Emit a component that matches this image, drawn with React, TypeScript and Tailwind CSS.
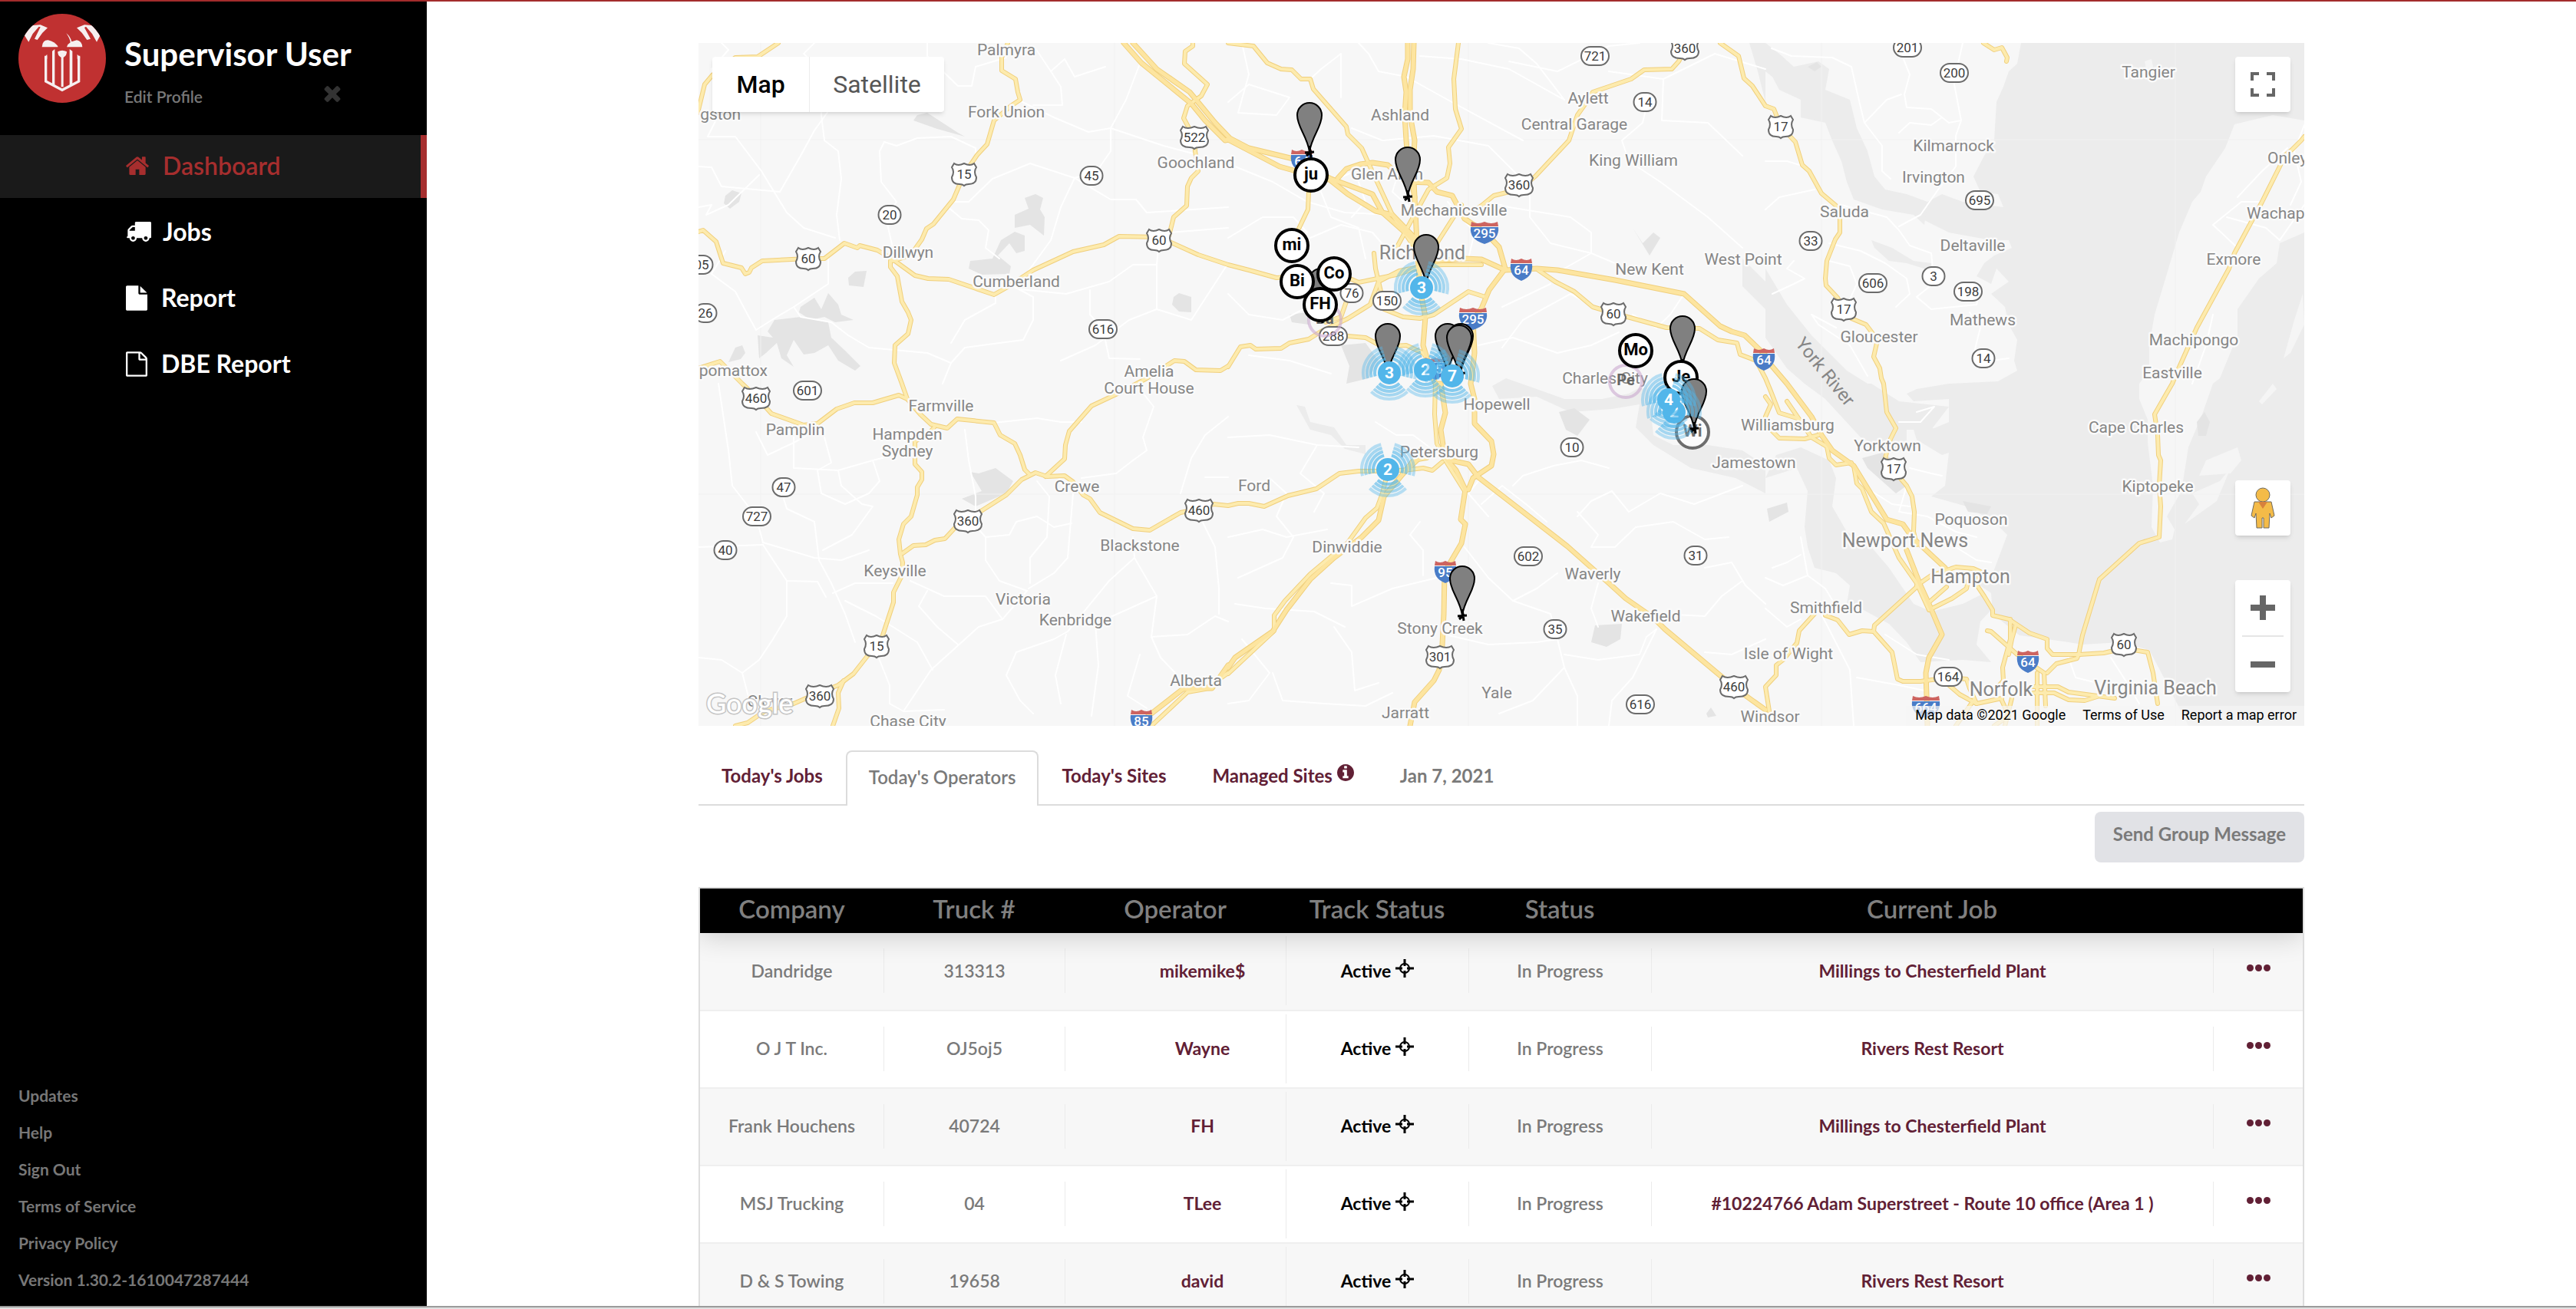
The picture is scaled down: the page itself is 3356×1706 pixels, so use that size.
import React from 'react'

/* ------------------------------------------------------------------ */
/* Icons                                                               */
/* ------------------------------------------------------------------ */

const ICONS = {
  home: 'M1472 992v480q0 26-19 45t-45 19h-384v-384h-256v384h-384q-26 0-45-19t-19-45v-480q0-1 .5-3t.5-3l575-474 575 474q1 2 1 6zm223-69l-62 74q-8 9-21 11h-3q-13 0-21-7l-692-577-692 577q-12 8-24 7-13-2-21-11l-62-74q-8-10-7-23.500t11-21.500l719-599q32-26 76-26t76 26l244 204v-195q0-14 9-23t23-9h192q14 0 23 9t9 23v408l219 182q10 8 11 21.500t-7 23.500z',
  truck:
    'M640 1408q0-52-38-90t-90-38-90 38-38 90 38 90 90 38 90-38 38-90zm-384-512h384v-256h-158q-13 0-22 9l-195 195q-9 9-9 22v30zm1280 512q0-52-38-90t-90-38-90 38-38 90 38 90 90 38 90-38 38-90zm256-1088v1024q0 15-4 26.500t-13.500 18.500-16.500 11.500-23.500 6-22.500 2-25.500 0-22.500-.5q0 106-75 181t-181 75-181-75-75-181h-384q0 106-75 181t-181 75-181-75-75-181h-64q-3 0-22.500 .5t-25.500 0-22.500-2-23.500-6-16.500-11.500-13.500-18.500-4-26.500q0-26 19-45t45-19v-320q0-8-.5-35t0-38 2.500-34.500 6.500-37 14-30.500 22.500-30l198-198q19-19 50.500-32t58.500-13h160v-192q0-26 19-45t45-19h1024q26 0 45 19t19 45z',
  file: 'M1152 512v-472q22 14 36 28l408 408q14 14 28 36h-472zm-128 32q0 40 28 68t68 28h544v1056q0 40-28 68t-68 28h-1344q-40 0-68-28t-28-68v-1600q0-40 28-68t68-28h800v544z',
  fileOutline:
    'M1596 380q28 28 48 76t20 88v1152q0 40-28 68t-68 28h-1344q-40 0-68-28t-28-68v-1600q0-40 28-68t68-28h896q40 0 88 20t76 48zm-444-244v376h376q-10-29-22-41l-313-313q-12-12-41-22zm384 1528v-1024h-416q-40 0-68-28t-28-68v-416h-768v1536h1280z',
  times:
    'M1490 1322q0 40-28 68l-136 136q-28 28-68 28t-68-28l-294-294-294 294q-28 28-68 28t-68-28l-136-136q-28-28-28-68t28-68l294-294-294-294q-28-28-28-68t28-68l136-136q28-28 68-28t68 28l294 294 294-294q28-28 68-28t68 28l136 136q28 28 28 68t-28 68l-294 294 294 294q28 28 28 68z',
  info: 'M1152 1376v-160q0-14-9-23t-23-9h-96v-512q0-14-9-23t-23-9h-320q-14 0-23 9t-9 23v160q0 14 9 23t23 9h96v320h-96q-14 0-23 9t-9 23v160q0 14 9 23t23 9h448q14 0 23-9t9-23zm-128-896v-160q0-14-9-23t-23-9h-192q-14 0-23 9t-9 23v160q0 14 9 23t23 9h192q14 0 23-9t9-23zm640 416q0 209-103 385.500t-279.500 279.500-385.500 103-385.500-103-279.500-279.500-103-385.500 103-385.500 279.500-279.500 385.500-103 385.500 103 279.500 279.500 103 385.500z',
}

function Icon({ name, box = '0 0 1792 1792', className }: { name: keyof typeof ICONS; box?: string; className: string }) {
  return (
    <svg viewBox={box} className={className} fill="currentColor" aria-hidden="true">
      <path d={ICONS[name]} />
    </svg>
  )
}

function Avatar() {
  return (
    <svg viewBox="42 24 342 348" className="mt-4 h-[116px] w-[114px] shrink-0" aria-hidden="true">
      <defs>
        <clipPath id="avatar">
          <ellipse cx="213" cy="198" rx="171" ry="174" />
        </clipPath>
      </defs>
      <g clipPath="url(#avatar)">
        <rect x="42" y="24" width="342" height="348" fill="#c03131" />
        <g fill="#f6eff0">
          <path d="M60 100 92 70 128 67 156 79 136 98 116 126 105 122 128 76 122 74 98 102 82 134Z" />
          <path d="M366 100 334 70 300 67 270 79 290 98 310 126 324 122 300 78 306 74 330 102 348 134Z" />
          <path d="M134 154Q136 126 158 127Q184 134 196 150V154Z" />
          <path d="M292 154Q290 130 270 127L250 133Q246 114 229 100Q244 122 245 136Q234 142 231 154Z" />
          <path d="M196 172Q213 162 231 172Q232 186 218 195V310H209V195Q194 186 196 172Z" />
          <path d="M174 170 184 162V306L174 300ZM242 162 253 170V300L242 306Z" />
        </g>
        <path d="M149 188V288L213 322L278 288V188" fill="none" stroke="#f6eff0" strokeWidth="10" />
        <path d="M143 196 154 182V200ZM284 196 272 182V200Z" fill="#f6eff0" />
      </g>
    </svg>
  )
}

function Crosshair() {
  return (
    <svg viewBox="0 0 24 24" className="mb-[6px] ml-[6px] inline-block size-6" fill="none" stroke="#000" aria-hidden="true">
      <circle cx="12" cy="12" r="6" strokeWidth="2" />
      <path d="M12 0V9M12 15V24M0 12H9M15 12H24" strokeWidth="3" />
    </svg>
  )
}

/* ------------------------------------------------------------------ */
/* Map geometry: six survey sheets joined into one drawing             */
/* ------------------------------------------------------------------ */

const SHEETS: Record<string, [number, number, number]> = {
  nw: [900, 50, 2.24],
  n: [1600, 50, 2.24],
  ne: [2300, 50, 2.178],
  sw: [900, 500, 2.24],
  s: [1600, 500, 2.24],
  se: [2300, 500, 2.178],
}

function trace(line: string, closed = false) {
  let sheet = SHEETS.nw
  const pts: string[] = []
  for (const token of line.trim().split(/\s+/)) {
    if (SHEETS[token]) {
      sheet = SHEETS[token]
      continue
    }
    const [x, y] = token.split(',').map(Number)
    pts.push(`${Math.round(sheet[0] + x / sheet[2])} ${Math.round(sheet[1] + y / 3)}`)
  }
  return 'M' + pts.join('L') + (closed ? 'Z' : '')
}

const WATER = [
  'ne 725,18 715,100 690,130 675,190 655,250 650,400 620,460 590,540 610,600 660,610 675,660 560,640 500,610 460,640 450,710 520,760 640,790 690,790 700,820 650,850 620,880 600,930 640,960 655,900 690,950 640,1000 680,1050 690,1120 715,1180 705,1260 715,1300 660,1340 se 520,0 430,20 400,40 420,70 520,60 520,150 480,175 420,180 430,220 500,280 520,270 510,400 470,440 570,480 650,540 685,590 640,760 600,780 640,820 645,900 720,985 860,1010 900,1020 1010,1010 1090,1040 1130,1150 1200,1338 1540,1338 ne 1540,18',
  'ne 0,18 40,60 80,110 150,90 180,120 170,200 240,240 260,350 290,440 310,540 340,590 400,610 460,640 450,730 420,690 330,670 250,630 230,560 215,480 190,400 170,330 100,310 100,240 40,200 20,150 0,130',
  'ne 0,900 60,1040 130,1160 230,1300 290,1350 se 300,0 380,70 520,90 470,180 400,180 400,260 360,270 270,210 170,60 110,0 60,-60 0,-180',
  'se 0,370 30,280 100,250 180,300 200,370 190,480 230,580 300,640 350,720 420,860 470,890 560,860 620,820 645,880 610,930 600,1020 640,1090 560,1080 440,1090 400,1010 350,940 270,880 230,860 240,790 200,740 140,720 120,640 110,560 120,420 90,330',
  's 770,10 810,-20 900,20 980,60 1090,60 1170,40 1220,0 1230,60 1240,200 1300,240 1400,240 1500,260 1568,320 1568,430 1480,370 1350,330 1240,240 1190,170 1200,80 1120,100 1000,110 900,50 790,60',
  'ne 300,790 360,820 420,870 470,880 470,910 400,880 350,870 310,820',
  'n 1520,18 1568,18 1568,250 1545,130',
  'n 1500,860 1568,950 1568,1060 1500,970',
  's 200,85 225,90 240,150 310,170 345,240 400,240 400,275 340,255 300,200 240,180',
]

const SHORE =
  'ne 1529,320 1440,300 1330,335 1305,430 1250,540 1235,600 1210,640 1175,760 1140,920 1105,1080 1090,1200 1090,1300 1060,1350 se 1060,60 1085,140 1085,230 1100,400 1095,560 1120,620 1155,610 1160,570 1140,520 1180,420 1200,250 1240,120 1270,0 ne 1290,1330 1340,1160 1340,1060 1400,940 1450,880 1460,800 1529,760'

const ISLANDS = [
  'se 1210,430 1290,380 1320,330 1280,460 1190,550 1230,470',
  'se 1250,300 1340,250 1350,300 1320,350 1230,360',
  'ne 1470,1250 1500,1100 1525,1000 1529,1120 1490,1230',
  'se 1400,70 1440,0 1450,20 1410,80',
  'ne 1075,90 1095,80 1100,110 1080,120',
]

const PARKS = [
  'nw 100,615 120,595 148,605 140,640 115,665 97,645',
  'nw 975,625 1005,610 1028,625 1020,670 1032,700 1030,770 990,730 945,740 945,690 985,665',
  'nw 945,755 975,770 975,830 950,840 930,800 895,850 935,890 930,920 850,925 810,900 815,870 880,860 905,790',
  'nw 1408,1010 1425,995 1460,1010 1460,1070 1425,1068 1405,1040',
  'nw 460,935 480,912 513,908 503,972 462,965',
  'nw 245,1100 320,1090 400,1110 410,1170 450,1220 495,1280 480,1300 430,1260 400,1200 360,1230 330,1235 300,1180 280,1240 300,1285 265,1250 250,1190 220,1230 200,1250 195,1160 240,1170 225,1145',
  'nw 320,1050 360,1015 380,1060 400,995 430,1040 440,1080 475,1100 420,1110 390,1090 350,1100 315,1070',
  'nw 130,1210 150,1200 160,1230 145,1255 110,1265',
  'nw 660,300 690,290 780,370 800,385 720,355 650,320',
  'sw 840,350 890,330 940,380 920,430 830,480 790,450 850,420 815,345',
  'n 330,1200 400,1190 440,1260 410,1330 345,1350 355,1280',
  'n 1210,800 1240,760 1260,780 1230,850 1180,740',
  's 965,110 1010,95 1055,140 1020,205 985,180',
  's 1070,945 1150,940 1145,1000 1105,1030 1060,1010',
  's 1395,1290 1410,1265 1425,1300 1400,1305',
  'ne 120,110 145,92 160,110 140,130',
  'se 275,290 330,270 375,310 400,400 370,430 290,330',
  'se 5,490 60,465 65,500 10,540',
  'se 560,460 640,480 630,510 575,500',
  'se 1225,150 1245,110 1260,150 1250,205 1228,205',
  'n 180,1080 230,1070 235,1120 185,1110',
]

const MINOR = [
  'nw 90,18 110,45 60,120 80,300 50,385 130,385 205,520 280,680 330,740 420,780',
  'nw 22,500 60,505 90,580 260,600 320,460 360,360 430,230 500,120',
  'nw 360,18 330,60 370,110 380,300 390,400 430,440 440,550 425,690 435,790',
  'nw 565,405 550,440 555,560 600,640 570,700 590,820',
  'nw 565,405 600,420 660,390 760,385 830,430 830,470',
  'nw 690,18 690,70 780,185 820,185 830,110 920,75',
  'nw 1005,40 1050,130 1080,190 1085,260 1000,260',
  'nw 1050,130 1090,80 1120,150 1210,110',
  'nw 955,240 1060,310 1160,365 1225,350 1380,420 1465,450',
  'nw 1310,100 1270,240 1225,350 1225,440 1185,520 1120,545 1080,660 1050,790 985,910',
  'nw 770,640 810,640 880,550 990,490 1120,545 1225,630 1300,630 1330,680 1568,660',
  'nw 750,660 790,705 840,710 870,750 860,820 900,860',
  'nw 22,660 60,650 45,690 110,650 200,535',
  'nw 100,830 60,920 130,990 165,1080 190,1140 250,1090 300,1050 400,960 400,860',
  'nw 300,1050 320,1090 410,1110 460,1160 520,1210 690,1230 760,1270',
  'nw 940,970 1000,1010 1000,1100 970,1180 900,1190 800,1210 760,1270 735,1350',
  'nw 960,980 1095,1000 1220,950 1290,885 1360,885 1360,1060 1280,1100 1180,1200 1080,1260',
  'nw 1365,820 1360,885',
  'nw 1360,1060 1460,1100 1568,880',
  'nw 1165,985 1165,1080 1203,1137 1220,1250 1310,1255',
  'nw 890,1010 890,1035 800,1100 760,1190',
  'nw 1395,760 1568,740',
  'n 40,18 60,140 30,290 140,300 180,230 60,180 0,250',
  'n 240,160 270,120 330,60 330,230',
  'n 380,18 410,60 440,130 520,150 640,240 860,400',
  'n 360,350 450,400 600,380 760,420 850,540',
  'n 560,70 680,80 820,120 980,240',
  'n 820,90 960,130 1110,30 1200,18',
  'n 980,240 900,100 850,40 760,18',
  'n 1110,130 1270,160 1420,60 1568,120',
  'n 1217,290 1210,330 1150,400 1170,480 1260,560 1400,700 1500,820',
  'n 1270,160 1265,320 1400,330 1500,460',
  'n 880,600 880,700 940,800 1060,840 1130,880',
  'n 760,640 820,660 1000,700 1060,760 1060,840 980,900',
  'n 20,500 130,560 230,640 340,680 480,690',
  'n 240,780 330,730 420,760 480,850',
  'n 270,600 300,700 380,740 400,860',
  'n 300,560 370,520 400,640 360,700',
  'n 0,780 100,700 190,700 230,760',
  'n 0,1000 60,1080 160,1100 220,1060',
  'n 520,430 480,600 560,700 680,650',
  'n 640,640 720,760 700,860',
  'n 800,1050 880,1000 940,960',
  'n 800,1210 860,1100 1000,1000 1070,1050',
  'n 730,1200 830,1170 960,1230 1060,1200 1140,1150',
  'n 60,1240 180,1260 300,1310',
  'n 1330,1000 1290,1080 1250,1130 1180,1080',
  'ne 18,40 75,70 190,75 245,110 270,270 280,330 330,420 330,520 355,550',
  'ne 560,18 545,110 535,180 555,320 540,380 540,500 490,590 440,690 380,735',
  'ne 390,75 410,140 395,220 400,270 470,275 520,330 555,320',
  'ne 280,330 345,240 385,220',
  'ne 380,370 410,330 470,340 500,310',
  'ne 0,480 60,480 110,500',
  'ne 0,670 40,620 140,590',
  'ne 215,650 345,700 380,750 410,810 470,840 475,900',
  'ne 180,800 270,830 340,880 400,940 410,1000 370,1050',
  'ne 180,870 240,890 260,960 240,1020',
  'ne 475,960 430,1010 470,1060 600,1040 610,980',
  'ne 580,1070 610,1130 590,1240 640,1260 690,1250',
  'ne 20,1000 80,960 110,940 60,900 80,870',
  'ne 200,1130 130,1080 150,1120 240,1200 290,1320',
  'ne 1340,620 1410,520 1480,430',
  'ne 1400,640 1350,640 1270,730 1340,820',
  'ne 1310,700 1420,740 1460,790 1529,650',
  'ne 1529,340 1500,440 1520,560 1490,650',
  'ne 1270,1080 1250,1200 1210,1350',
  'sw 80,0 110,260 120,400 190,520 210,620 360,680 440,690 520,650',
  'sw 190,190 225,280 300,230 370,180',
  'sw 300,200 300,330 430,340 530,300 620,270',
  'sw 390,210 410,310 370,340 380,430 450,470 520,430 550,380 530,300',
  'sw 430,340 440,400 500,470 530,480 470,590 385,650',
  'sw 22,640 210,630',
  'sw 272,450 280,490 360,540 375,690 410,780 450,900 480,1010',
  'sw 210,630 280,770 370,775 395,835',
  'sw 280,770 280,910 240,1000 200,1080 150,1130 180,1280',
  'sw 22,1070 90,1080 150,1130',
  'sw 640,770 740,830 860,830 910,920 840,950 700,1120 620,1280',
  'sw 690,810 665,870 720,950 780,1020',
  'sw 415,820 480,780 590,780',
  'sw 450,850 540,910 660,1010 705,1120',
  'sw 545,1060 580,1180 580,1250 620,1280 740,1275',
  'sw 800,180 810,300 830,440 830,500',
  'sw 885,152 1010,135 1080,150 1140,150',
  'sw 840,570 860,600 860,690 900,770 980,810 910,920',
  'sw 860,600 930,590 950,540 1010,520 1060,560 1110,545',
  'sw 1010,380 1045,440 1040,600 990,680 990,780',
  'sw 1115,430 1100,680 1060,740 985,800',
  'sw 1290,600 1295,680 1220,770 1100,970 1060,1000 950,1050 920,1140 960,1240 1000,1290',
  'sw 1295,680 1360,830 1180,940 1190,1100 1170,1300',
  'sw 1360,830 1345,990 1370,1070 1420,1140',
  'sw 1345,990 1450,980 1530,910 1568,930',
  'sw 1095,980 1065,1140 1080,1250',
  'sw 1310,1060 1275,1220 1330,1270',
  'sw 1310,20 1350,90 1320,210 1330,260 1290,300 1240,350 1140,370',
  'sw 1568,130 1500,200 1460,290 1430,430',
  'sw 1500,365 1568,365',
  'sw 1485,520 1530,640 1540,800 1540,900',
  's 0,210 120,200 260,240 380,250',
  's 260,240 210,350 280,430 250,500',
  's 0,600 100,570 170,600 290,570',
  's 120,370 170,430 140,520 190,600 160,680 30,760',
  's 300,780 360,790 360,870 480,800 610,760',
  's 560,540 530,590 570,650 570,750',
  's 430,150 490,200 540,200 600,260',
  's 730,380 700,430 760,520',
  's 740,470 800,400 870,470 930,540',
  's 690,640 760,760 830,850 940,900 960,1000 980,1110 890,1240 790,1290',
  's 635,980 760,1020 900,1010 960,1000',
  's 830,850 900,800 960,740',
  's 980,1110 1020,1220 1020,1338',
  's 980,1060 1080,1080 1200,1060 1220,990 1250,960',
  's 1250,960 1180,1150 1120,1240 1110,1338',
  's 1080,780 1060,880 1080,950',
  's 1020,500 1080,590 1060,640 1130,640 1190,560 1300,540 1390,610 1460,600',
  's 1170,500 1120,420 1060,460 1020,520',
  's 1170,500 1260,430 1360,470 1500,400',
  's 1390,720 1470,700 1510,790 1568,860',
  's 1260,900 1390,910 1440,830 1500,770',
  's 1390,1050 1470,1060 1568,1000',
  's 830,400 860,360 950,320 1030,300 1110,330',
  's 40,1000 120,1130 60,1240 0,1250',
  's 130,1130 160,1240 280,1250 400,1260 480,1210',
  's 310,950 360,1050 370,1200 440,1170',
  's 20,860 110,880 250,890 340,950',
  'se 100,600 120,750 50,790 0,760',
  'se 120,750 170,800 200,870',
  'se 0,880 60,950 100,920',
  'se 150,880 240,1120 250,1338',
  'se 100,670 60,700 20,720',
  'se 380,150 440,150 480,90 430,110',
  'se 410,330 470,350 500,360',
  'se 400,400 380,500 460,520 540,580 600,600',
  'se 540,640 600,690 640,700',
  'se 340,980 430,1060 520,1080',
  'se 860,1070 880,1150 940,1170',
  'se 980,1070 1030,1180 1060,1250',
  'se 260,1150 380,1180 450,1200',
  'se 650,1180 720,1180 770,1180',
  'se 300,420 360,470 410,480',
]

const HIGHWAYS = [
  'nw 255,18 195,72 130,75 62,145 40,180 20,290',
  'nw 925,18 908,75 908,125 948,160 955,210 962,240 935,265 885,320 865,415 835,455 797,530 765,630 708,725 688,745 675,785 640,850 590,870',
  'nw 22,755 35,750 75,795 95,880 148,898 158,922 170,915 178,898 208,870 340,862 390,860 447,800 485,818 492,810 545,828 590,865 655,928 692,940 752,942 885,1002 920,975 1000,905 1115,835 1205,808 1250,775 1367,778 1480,845 1568,885 n 60,905 140,935 200,930 330,925 380,955 490,925 570,890 625,885 740,885',
  'nw 582,870 582,895 603,930 615,1030 635,1070 642,1100 635,1155 595,1200 593,1270 615,1350 sw 632,60 655,95 670,120 700,158 748,175 778,138 885,152 902,200 945,235 960,280 975,335 990,357',
  'nw 1465,18 1465,30 1443,50 1440,98 1508,180 1490,225 1450,265 1437,312 1470,390 1472,440 1480,520 1460,545 1450,580 1447,655 1410,700 1395,770',
  'nw 22,1290 85,1262 150,1350 sw 190,50 235,118 330,162 370,155 425,100 478,75 530,75 608,45 632,60',
  'n 0,1285 35,1205 65,1200 80,1215 155,1212 180,1190 235,1175 270,1145 350,1095 415,1040 440,950 500,910 570,890',
  'nw 1568,1280 1545,1300 1475,1295 1440,1262 1412,1260 1330,1330 sw 1245,40 1170,88 1105,185 1092,240 1090,295 1035,362',
  'sw 710,170 690,200 655,225 655,315 675,345 675,375 660,405 660,435 643,520 620,550 608,610 612,665 618,700 615,750 592,815 592,855 560,985 545,1030 515,1065 475,1135 430,1178 335,1230 300,1250 215,1282 165,1325 130,1338',
  'sw 445,1160 430,1210 432,1270 415,1338',
  'sw 618,662 650,632 685,630 712,612 742,605 770,565 808,530 920,435 965,375 1005,348 1040,362 1090,360 1115,385 1145,435 1165,450 1195,505 1290,568 1340,573 1430,503 1485,490 1525,470 s 0,478 30,468 60,468 105,480 175,437 258,412 325,352 380,343 465,343 530,335 570,330 595,338 625,305',
  'n 0,18 75,30 115,95 155,120 185,122 213,160 240,160 248,198 345,345 350,375 390,430 410,490 480,690 550,830',
  'n 673,18 658,160 662,275 680,355 643,425 648,490 638,545 585,590 560,650',
  'n 235,540 235,600 232,670 205,745',
  'n 905,905 955,950 1010,990 1065,1050 1125,1075 1280,1130 1375,1135 1430,1180 1485,1190 1495,1235 1540,1260 ne 0,1330 se 15,30 40,115 90,135 130,170',
  'n 710,680 740,655 775,615 850,590 895,540 995,398 1020,300 1045,250 1065,210 1175,160 1215,122 1295,120 1315,90 1335,40',
  'n 1435,18 1490,70 1505,155 1530,185 1568,265 ne 25,275 43,345 85,405 105,495 125,520 160,605 200,655 212,700 212,760 198,785 175,870 170,940 172,965 205,1015 222,1060 245,1095 285,1120 318,1180 308,1245 325,1290 328,1330 se 335,0 345,110 370,175 355,215 340,290 363,340 400,400 415,440 422,500 420,580 430,630',
  'n 425,840 430,900 445,990 455,1060 510,1090 560,1095 600,1080 700,990 750,1010',
  'n 680,650 610,800 560,860',
  'n 480,850 540,700',
  'n 350,1165 400,1170 450,1205 520,1200 570,1230 580,1250',
  'n 285,1110 330,1090 345,1030',
  'ne 1529,385 1520,400 1495,435 1475,455 1460,500 1410,640 1330,840 1315,900 1225,1130 1170,1300 se 1155,0 1140,35 1105,120 1112,200 1115,280 1122,300 1118,400 1122,480 1118,600 1060,625 948,765 900,985 888,1060 885,1075 825,1095 800,1130',
  'ne 618,18 650,45 670,35 685,75 683,90',
  'se 0,50 15,80 0,130',
  'se 0,160 40,212 110,215 150,200',
  'se 60,70 130,210 175,245 180,290 200,318 245,310',
  'se 250,320 260,390 275,410 300,500 335,545 380,680 430,780 465,885 530,840 570,800 575,770',
  'se 430,790 470,750 540,718 590,722 610,735 600,785 620,830 645,885 645,905 690,920 750,975 800,1000 800,1035 815,1058 890,1058 960,1052 1017,1035 1085,1050 1100,1130 1112,1250',
  'se 430,795 310,945 308,970 360,1050 375,1155 390,1163 440,1163 520,1150 570,1155 580,1190 600,1250',
  'se 308,970 275,965 238,982 205,925 170,905',
  'se 140,900 95,965 90,1015 50,1080 30,1100 30,1140 0,1185 10,1280',
  'se 465,855 515,795',
  'se 630,965 640,968 715,1060 790,1130 795,1260',
  'se 695,920 695,1000 672,1110 675,1160 650,1200',
  'se 710,945 700,1000 690,1060',
  'se 520,1180 550,1215 600,1250 640,1240 670,1230',
  'se 770,1130 770,1338',
  'se 760,1185 830,1185 860,1205 990,1230',
  'se 760,1210 820,1210 860,1235 905,1240 940,1225',
  'se 590,1240 540,1338',
  'se 670,1240 690,1300 650,1338',
  'se 700,1230 680,1338',
  'sw 1568,1130 1500,1195 1450,1205 1345,1338',
  's 0,1135 135,965 135,905 165,850 240,745 350,620 400,525 435,485 450,430 465,343',
  's 500,370 540,300 580,290',
  's 605,0 602,120 610,235 635,300 690,420',
]

const INTERSTATES = [
  'nw 1263,18 1315,95 1460,255 1500,320 1560,400 n 0,395 150,500 190,515 235,545 295,552 350,610 430,675 480,690 545,780',
  'nw 1290,18 1360,120 1455,210 1530,330 n 5,390 60,430 190,470 300,550 360,580 420,610 450,680 550,800',
  'n 525,18 525,80 512,150 520,210 515,300 520,400 525,470 545,620 550,800 560,980 575,1090 570,1200 590,1290 605,1350 s 620,0 635,115 620,180 628,240 640,300 665,340 692,415 678,530 692,550 680,625 650,695 632,740 630,900 625,1020 615,1120 600,1160 545,1245 530,1338',
  'n 543,18 540,120 530,200 530,300 545,400 540,500 545,620',
  'n 320,545 345,510 385,492 420,487 465,495 520,560 585,565 610,600 655,615 690,705 750,760 790,815 808,900 762,985 740,1055 715,1100 718,1230 710,1330 s 708,0 720,60 720,155 768,225 775,275 768,320 715,370 700,415',
  'n 600,870 690,860 740,865 808,905 900,900 960,905 1130,945 1330,1000 1435,1125 1470,1145 1508,1160 1568,1240 ne 10,1270 se 60,0 130,130 160,200 190,260 250,320 345,530 390,550 415,600 510,720',
  's 650,300 700,315 730,365 820,460 990,635 1110,780 1160,840 1240,915 1275,960 1440,1145 1480,1190 1530,1240 1568,1275',
  's 0,1110 20,1070 130,970 170,885 240,765 310,680 390,600 440,535 455,440 515,345 555,295',
  'sw 1568,1100 1520,1190 1435,1195 1345,1290 1300,1338',
  'se 400,650 440,790 465,860 500,980 465,1070 455,1130 458,1220 460,1338',
]

const GRID = ['nw 203,18 203,1350 sw 203,1338', 'nw 1237,18 1237,1350 sw 1237,1338', 'n 700,18 700,1350 s 700,1338', 'ne 158,18 158,1350 se 158,1338', 'ne 1163,18 1163,1350 se 1163,1338', 'nw 22,397 n 0,397 ne 1529,397', 'sw 22,433 s 0,433 se 1529,433']

type Anchor = 'start' | 'middle' | 'end'
const TOWNS: [string, number, number, Anchor?][] = [
  ['Palmyra', 1311, 72],
  ['Fork Union', 1311, 153],
  ['gston', 965, 156, 'end'],
  ['Goochland', 1558, 219],
  ['Dillwyn', 1183, 336],
  ['Cumberland', 1324, 374],
  ['pomattox', 1000, 490, 'end'],
  ['Amelia', 1497, 491],
  ['Court House', 1497, 513],
  ['Ashland', 1824, 157],
  ['Glen Allen', 1807, 234],
  ['Mechanicsville', 1894, 281],
  ['Aylett', 2069, 135],
  ['Central Garage', 2051, 169],
  ['King William', 2128, 216],
  ['New Kent', 2149, 358],
  ['West Point', 2271, 345],
  ['Charles City', 2091, 500],
  ['Tangier', 2799, 101],
  ['Kilmarnock', 2545, 197],
  ['Irvington', 2519, 238],
  ['Saluda', 2403, 283],
  ['Deltaville', 2570, 327],
  ['Onley', 2954, 213, 'start'],
  ['Wachapreague', 2927, 285, 'start'],
  ['Exmore', 2910, 345],
  ['Mathews', 2583, 424],
  ['Gloucester', 2448, 446],
  ['Machipongo', 2858, 450],
  ['Eastville', 2830, 493],
  ['Farmville', 1226, 536],
  ['Hampden', 1182, 573],
  ['Sydney', 1182, 595],
  ['Pamplin', 1036, 567],
  ['Crewe', 1403, 641],
  ['Blackstone', 1485, 718],
  ['Keysville', 1166, 751],
  ['Victoria', 1333, 788],
  ['Kenbridge', 1401, 815],
  ['Alberta', 1558, 894],
  ['Clover', 1003, 921],
  ['Chase City', 1183, 947],
  ['Hopewell', 1950, 534],
  ['Petersburg', 1875, 596],
  ['Ford', 1634, 640],
  ['Dinwiddie', 1755, 720],
  ['Waverly', 2075, 755],
  ['Wakefield', 2144, 810],
  ['Stony Creek', 1876, 826],
  ['Yale', 1950, 910],
  ['Jarratt', 1831, 936],
  ['Williamsburg', 2329, 561],
  ['Jamestown', 2285, 610],
  ['Isle of Wight', 2330, 859],
  ['Windsor', 2306, 941],
  ['Yorktown', 2459, 588],
  ['Cape Charles', 2783, 564],
  ['Kiptopeke', 2811, 641],
  ['Poquoson', 2568, 684],
  ['Smithfield', 2379, 799],
]

const CITIES: [string, number, number][] = [
  ['Richmond', 1853, 338],
  ['Newport News', 2482, 713],
  ['Hampton', 2567, 760],
  ['Norfolk', 2607, 907],
  ['Virginia Beach', 2808, 905],
]

const US_ROUTES: [string, number, number][] = [
  ['522', 1556, 179], ['15', 1256, 227], ['60', 1510, 313], ['60', 1053, 337], ['360', 1979, 241], ['360', 2195, 63],
  ['60', 2102, 409], ['17', 2320, 165], ['17', 2402, 403], ['460', 985, 519], ['360', 1261, 679], ['460', 1562, 665],
  ['15', 1142, 842], ['360', 1068, 907], ['301', 1876, 856], ['460', 2259, 895], ['17', 2467, 611], ['60', 2767, 840],
]

const STATE_ROUTES: [string, number, number][] = [
  ['45', 1422, 229], ['20', 1159, 280], ['05', 914, 345], ['26', 919, 408], ['616', 1437, 429], ['721', 2078, 73],
  ['14', 2143, 133], ['76', 1761, 382], ['150', 1807, 392], ['288', 1737, 438], ['201', 2485, 62], ['200', 2546, 95],
  ['695', 2579, 261], ['33', 2359, 314], ['606', 2440, 369], ['3', 2519, 360], ['198', 2564, 380], ['14', 2584, 467],
  ['601', 1052, 509], ['47', 1021, 635], ['727', 986, 673], ['40', 945, 717], ['10', 2048, 583], ['602', 1991, 725],
  ['31', 2209, 724], ['35', 2026, 820], ['616', 2137, 918], ['164', 2538, 882],
]

const INTERSTATE_SIGNS: [string, number, number][] = [
  ['64', 1696, 209], ['295', 1934, 303], ['64', 1982, 351], ['295', 1919, 415], ['64', 2298, 468], ['95', 1870, 480],
  ['85', 1487, 939], ['95', 1883, 745], ['64', 2642, 862], ['664', 2509, 921],
]

function UsShield({ label, x, y }: { label: string; x: number; y: number }) {
  const w = label.length > 2 ? 18 : 16
  return (
    <g transform={`translate(${x} ${y})`}>
      <path
        d={`M${-w + 3}-14Q${-w / 2}-10 0-14Q${w / 2}-10 ${w - 3}-14L${w}-9Q${w - 4}-3 ${w} 4Q${w} 13 6 13Q2 13 0 15Q-2 13-6 13Q${-w} 13 ${-w} 4Q${-w + 4}-3 ${-w}-9Z`}
        fill="#fff"
        stroke="#6b6b6b"
        strokeWidth="2"
      />
      <text y="6" textAnchor="middle" className="fill-[#3c3c3c] text-[17px]">{label}</text>
    </g>
  )
}

function StateRoute({ label, x, y }: { label: string; x: number; y: number }) {
  const w = label.length > 2 ? 36 : 29
  return (
    <g transform={`translate(${x} ${y})`}>
      <rect x={-w / 2} y="-12" width={w} height="24" rx="12" fill="#fff" stroke="#6b6b6b" strokeWidth="2" />
      <text y="6" textAnchor="middle" className="fill-[#3c3c3c] text-[17px]">{label}</text>
    </g>
  )
}

function InterstateSign({ label, x, y }: { label: string; x: number; y: number }) {
  const w = label.length > 2 ? 18 : 14
  return (
    <g transform={`translate(${x} ${y})`}>
      <path d={`M${-w}-8L${-w + 1}-14Q${-w / 2}-10 0-14Q${w / 2}-10 ${w - 1}-14L${w}-8Z`} fill="#cd6460" />
      <path d={`M${-w}-7H${w}Q${w + 2} 9 0 15Q${-w - 2} 9 ${-w}-7Z`} fill="#4a7cc7" />
      <text y="7" textAnchor="middle" className="fill-white text-[17px] font-medium">{label}</text>
    </g>
  )
}

function Pin({ x, y }: { x: number; y: number }) {
  return (
    <g transform={`translate(${x} ${y})`} stroke="#000">
      <path d="M0 64C-3 43-16 32-16 16A16 16 0 1 1 16 16C16 32 3 43 0 64Z" fill="#808080" strokeWidth="2" />
      <path d="M-6 65L6 64M-4 69L3 63M0 56L2 71" strokeWidth="3" fill="none" />
    </g>
  )
}

function Operator({ label, x, y, r = 21 }: { label: string; x: number; y: number; r?: number }) {
  return (
    <g transform={`translate(${x} ${y})`}>
      <circle r={r} fill="#fff" stroke="#000" strokeWidth="4" />
      <text y="6" textAnchor="middle" className="fill-black text-[22px] font-bold">{label}</text>
    </g>
  )
}

function arc(r: number, from: number, to: number) {
  const p = (a: number) => `${(r * Math.cos((a * Math.PI) / 180)).toFixed(1)} ${(r * Math.sin((a * Math.PI) / 180)).toFixed(1)}`
  return `M${p(from)}A${r} ${r} 0 0 1 ${p(to)}`
}

function Cluster({ count, x, y }: { count: number; x: number; y: number }) {
  return (
    <g transform={`translate(${x} ${y})`}>
      {[
        [19, 0.7],
        [24, 0.6],
        [29, 0.5],
        [34, 0.4],
      ].map(([r, o]) => (
        <path key={r} d={arc(r, -75, 14) + arc(r, 46, 134) + arc(r, 166, 255)} fill="none" stroke="#52b6ea" strokeWidth="4" opacity={o} />
      ))}
      <circle r="15" fill="#52b6ea" />
      <text y="7" textAnchor="middle" className="fill-white text-[21px] font-bold">{count}</text>
    </g>
  )
}

function MapDrawing() {
  return (
    <svg viewBox="910 56 2092 890" preserveAspectRatio="xMidYMid slice" className="block h-full w-full" role="img" aria-label="Map of central Virginia">
      <rect x="910" y="56" width="2092" height="890" fill="#f7f7f7" />
      {WATER.map((w) => <path key={w} d={trace(w, true)} fill="#ececec" />)}
      <path d={trace(SHORE, true)} fill="#f6f6f6" />
      {ISLANDS.map((w) => <path key={w} d={trace(w, true)} fill="#f5f5f5" />)}
      {PARKS.map((w) => <path key={w} d={trace(w, true)} fill="#e4e4e4" />)}
      <g fill="none" strokeLinejoin="round" strokeLinecap="round">
        {GRID.map((r) => <path key={r} d={trace(r)} stroke="#f1f1f1" />)}
        {MINOR.map((r) => <path key={r} d={trace(r)} stroke="#fff" strokeWidth="2" />)}
        {HIGHWAYS.map((r) => <path key={r} d={trace(r)} stroke="#f0cf7c" strokeWidth="6" />)}
        {INTERSTATES.map((r) => <path key={r} d={trace(r)} stroke="#f0cf7c" strokeWidth="7" />)}
        {HIGHWAYS.map((r) => <path key={r} d={trace(r)} stroke="#fdebae" strokeWidth="4" />)}
        {INTERSTATES.map((r) => <path key={r} d={trace(r)} stroke="#fde5a0" strokeWidth="5" />)}
      </g>
      <g className="fill-[#868686]" stroke="#fafafa" strokeWidth="5" strokeLinejoin="round" paintOrder="stroke">
        {TOWNS.map(([name, x, y, anchor]) => (
          <text key={name} x={x} y={y} textAnchor={anchor ?? 'middle'} className="text-[21px]">{name}</text>
        ))}
        {CITIES.map(([name, x, y]) => (
          <text key={name} x={x} y={y} textAnchor="middle" className="text-[25px]">{name}</text>
        ))}
        <text transform="translate(2338 448) rotate(51)" stroke="none" className="text-[24px]">York River</text>
      </g>
      {US_ROUTES.map(([l, x, y]) => <UsShield key={l + x} label={l} x={x} y={y} />)}
      {STATE_ROUTES.map(([l, x, y]) => <StateRoute key={l + x} label={l} x={x} y={y} />)}
      {INTERSTATE_SIGNS.map(([l, x, y]) => <InterstateSign key={l + x} label={l} x={x} y={y} />)}

      <g opacity="0.6" fill="none" stroke="#c9a9cf" strokeWidth="4">
        <circle cx="1726" cy="417" r="21" />
        <circle cx="2118" cy="497" r="21" />
      </g>
      <text x="1726" y="422" textAnchor="middle" className="fill-[#666] text-[20px] font-bold">Ba</text>
      <text x="2118" y="502" textAnchor="middle" className="fill-[#666] text-[20px] font-bold">Pe</text>
      <Pin x={1706} y={134} />
      <Pin x={1834} y={192} />
      <Pin x={1721} y={350} />
      <Pin x={1858} y={306} />
      <Pin x={1808} y={422} />
      <Pin x={1886} y={422} />
      <Pin x={1903} y={422} />
      <Pin x={1901} y={424} />
      <Pin x={1905} y={738} />
      <Pin x={2192} y={412} />
      <Operator label="ju" x={1708} y={228} />
      <Operator label="mi" x={1683} y={320} />
      <Operator label="Bi" x={1690} y={367} />
      <Operator label="Co" x={1738} y={357} />
      <Operator label="FH" x={1720} y={397} />
      <Operator label="Mo" x={2131} y={457} />
      <Operator label="Je" x={2190} y={492} />
      <g opacity="0.55">
        <Operator label="Wi" x={2205} y={563} />
      </g>
      <Pin x={2207} y={494} />
      <Cluster count={3} x={1852} y={375} />
      <Cluster count={3} x={1810} y={486} />
      <Cluster count={2} x={1857} y={482} />
      <Cluster count={7} x={1892} y={490} />
      <Cluster count={2} x={1808} y={612} />
      <Cluster count={2} x={2181} y={537} />
      <Cluster count={4} x={2174} y={521} />
      <text x="920" y="930" stroke="#c4c4c4" strokeWidth="3" paintOrder="stroke" className="fill-white font-[Lato] text-[36px] font-medium">Google</text>
    </svg>
  )
}

function MapPanel() {
  return (
    <section className="relative h-[890px] overflow-hidden font-[Roboto]">
      <MapDrawing />
      <div className="absolute top-[18px] left-[18px] flex h-[72px] rounded-sm bg-white text-[32px] leading-[72px] shadow-md">
        <button className="w-[126px] text-center font-medium text-black">Map</button>
        <button className="w-44 border-l border-[#ececec] text-center text-[#565656]">Satellite</button>
      </div>
      <button aria-label="Toggle fullscreen view" className="absolute top-[18px] right-[18px] flex size-[72px] items-center justify-center rounded-sm bg-white shadow-md">
        <svg viewBox="0 0 32 32" className="size-8" fill="none" stroke="#666" strokeWidth="4">
          <path d="M2 11V2H11M21 2H30V11M30 21V30H21M11 30H2V21" />
        </svg>
      </button>
      <button aria-label="Drag Pegman onto the map" className="absolute right-[18px] bottom-[248px] flex size-[72px] items-center justify-center rounded-sm bg-white shadow-md">
        <svg viewBox="0 0 32 54" className="h-[54px] w-8" fill="#f4bb48" stroke="#6f6a5e">
          <path d="M5 19H27L31 37L27 40L25 34L24 53H17V40H15V53H8L7 34L5 40L1 37Z" />
          <circle cx="16" cy="10" r="9" />
          <path d="M10 19H22L16 28Z" fill="#d8813c" stroke="none" />
        </svg>
      </button>
      <div className="absolute right-[18px] bottom-11 flex w-[72px] flex-col items-center rounded-sm bg-white shadow-md">
        <button aria-label="Zoom in" className="flex size-[72px] items-center justify-center">
          <svg viewBox="0 0 32 32" className="size-8" stroke="#666" strokeWidth="8"><path d="M16 0V32M0 16H32" /></svg>
        </button>
        <div className="h-[2px] w-[54px] bg-[#e6e6e6]" />
        <button aria-label="Zoom out" className="flex size-[72px] items-center justify-center">
          <svg viewBox="0 0 32 32" className="size-8" stroke="#666" strokeWidth="8"><path d="M0 16H32" /></svg>
        </button>
      </div>
      <div className="absolute right-0 bottom-0 flex h-[26px] items-center gap-[22px] bg-[#f5f5f5]/70 pr-[10px] pb-[2px] pl-3 text-[18px] leading-none text-black">
        <span>Map data ©2021 Google</span>
        <a href="#terms">Terms of Use</a>
        <a href="#report">Report a map error</a>
      </div>
    </section>
  )
}

/* ------------------------------------------------------------------ */
/* Sidebar                                                             */
/* ------------------------------------------------------------------ */

const FOOTER = ['Updates', 'Help', 'Sign Out', 'Terms of Service', 'Privacy Policy']

function Sidebar() {
  return (
    <aside className="flex w-[556px] shrink-0 flex-col bg-black font-bold text-white">
      <header className="flex h-[174px] gap-6 pl-6">
        <Avatar />
        <div className="mt-11 w-[294px]">
          <h1 className="text-[42px] leading-[48px] whitespace-nowrap">Supervisor User</h1>
          <div className="mt-[10px] flex items-center justify-between pr-3">
            <a href="#profile" className="pt-2 text-[21px] leading-7 font-semibold text-[#777]">Edit Profile</a>
            <button aria-label="Dismiss" className="text-[#333]">
              <Icon name="times" box="302 302 1188 1252" className="h-[22px] w-[22px]" />
            </button>
          </div>
        </div>
      </header>
      <nav className="flex flex-col gap-1 text-[32px] leading-none">
        <a href="#dashboard" className="flex h-[82px] items-center gap-3 border-r-8 border-[#a62e2e] bg-[#1a1a1a] pb-[2px] pl-[164px] font-semibold text-[#a62e2e]">
          <span className="w-9"><Icon name="home" box="90 240 1610 1300" className="h-6 w-[30px]" /></span>
          Dashboard
        </a>
        <a href="#jobs" className="flex h-[82px] items-center gap-3 pb-[2px] pl-[164px]">
          <span className="w-9"><Icon name="truck" box="0 256 1792 1408" className="h-[26px] w-[33px]" /></span>
          Jobs
        </a>
        <a href="#report" className="flex h-[82px] items-center gap-[10px] pb-[2px] pl-[164px]">
          <span className="w-9"><Icon name="file" box="128 0 1536 1792" className="h-[33px] w-[28px]" /></span>
          Report
        </a>
        <a href="#dbe" className="flex h-[82px] items-center gap-[10px] pb-[2px] pl-[164px]">
          <span className="w-9"><Icon name="fileOutline" box="128 0 1536 1792" className="h-[33px] w-[28px]" /></span>
          DBE Report
        </a>
      </nav>
      <ul className="mt-auto pb-[10px] pl-6 text-[21px] leading-[48px] text-[#777]">
        {FOOTER.map((f) => (
          <li key={f}><a href="#">{f}</a></li>
        ))}
        <li>Version 1.30.2-1610047287444</li>
      </ul>
    </aside>
  )
}

/* ------------------------------------------------------------------ */
/* Operators table                                                     */
/* ------------------------------------------------------------------ */

const ROWS = [
  ['Dandridge', '313313', 'mikemike$', 'Millings to Chesterfield Plant'],
  ['O J T Inc.', 'OJ5oj5', 'Wayne', 'Rivers Rest Resort'],
  ['Frank Houchens', '40724', 'FH', 'Millings to Chesterfield Plant'],
  ['MSJ Trucking', '04', 'TLee', '#10224766 Adam Superstreet - Route 10 office (Area 1 )'],
  ['D & S Towing', '19658', 'david', 'Rivers Rest Resort'],
]

const CELL = 'flex h-[58px] items-center justify-center border-l border-[#ebebeb]'

function OperatorsTable() {
  return (
    <div className="overflow-hidden border-2 border-[#dedede] bg-white">
      <table className="w-full table-fixed border-collapse text-center text-[23px] font-semibold text-[#7a7a7a]">
        <colgroup>
          <col className="w-[239px]" />
          <col className="w-[236px]" />
          <col className="w-[288px]" />
          <col className="w-[238px]" />
          <col className="w-[238px]" />
          <col />
          <col className="w-[117px]" />
        </colgroup>
        <thead className="relative">
          <tr className="h-[58px] bg-black text-[33px] leading-none text-[#808080] shadow-[0_4px_36px_rgba(0,0,0,0.18)]">
            {['Company', 'Truck #', 'Operator', 'Track Status', 'Status', 'Current Job'].map((h) => (
              <th key={h} scope="col" className="p-0 pb-[6px] font-semibold">{h}</th>
            ))}
            <th className="p-0" aria-label="Actions" />
          </tr>
        </thead>
        <tbody>
          {ROWS.map(([company, truck, operator, job]) => (
            <tr key={company} className="h-[101px] border-b-2 border-[#efefef] odd:bg-[#f7f7f7]">
              <td className="p-0 pb-[2px]">{company}</td>
              <td className="p-0 pb-[2px]"><div className={CELL}>{truck}</div></td>
              <td className="p-0 pb-[2px]">
                <div className="flex h-[58px] items-center justify-center border-l border-[#ebebeb] pl-[70px] font-bold">
                  <a href="#operator" className="text-[#612035]">{operator}</a>
                </div>
              </td>
              <td className="p-0 pb-[2px]">
                <div className="flex h-[90px] items-center justify-center border-l border-[#ebebeb] font-bold text-black">Active <Crosshair /></div>
              </td>
              <td className="p-0 pb-[2px]"><div className={CELL}>In Progress</div></td>
              <td className="p-0 pb-[2px]">
                <div className="flex h-[58px] items-center justify-center border-l border-[#ebebeb] font-bold">
                  <a href="#job" className="text-[#612035]">{job}</a>
                </div>
              </td>
              <td className="p-0 pb-[2px]">
                <div className={CELL}>
                  <button aria-label={`Options for ${company}`} className="mb-2 flex gap-[2px]">
                    <span className="size-[9px] rounded-full bg-[#612035]" />
                    <span className="size-[9px] rounded-full bg-[#612035]" />
                    <span className="size-[9px] rounded-full bg-[#612035]" />
                  </button>
                </div>
              </td>
            </tr>
          ))}
        </tbody>
      </table>
    </div>
  )
}

export default function App() {
  return (
    <div className="flex h-screen flex-col border-t-2 border-[#a32c2c] bg-white font-['Lato','Liberation_Sans',sans-serif]">
      <div className="flex min-h-0 flex-1">
        <Sidebar />
        <main className="min-w-0 flex-1 overflow-hidden pt-[54px]">
          <div className="mx-auto w-full max-w-[2092px]">
            <MapPanel />
            <div role="tablist" className="mt-8 flex h-[72px] items-stretch border-b-2 border-[#dcdcdc] text-[24px] font-bold text-[#612035]">
              <button role="tab" className="px-[30px] pb-1">Today's Jobs</button>
              <button role="tab" aria-selected="true" className="-mb-[2px] rounded-t-lg border-2 border-b-0 border-[#dcdcdc] bg-white px-7 pb-1 font-semibold text-[#7a7a7a]">Today's Operators</button>
              <button role="tab" className="px-[30px] pb-1">Today's Sites</button>
              <button role="tab" className="flex items-center gap-[6px] px-[30px] pb-1">
                Managed Sites
                <Icon name="info" box="128 128 1536 1536" className="mb-2 size-[22px]" />
              </button>
              <span className="flex items-center px-[30px] pb-1 text-[#7a7a7a]">Jan 7, 2021</span>
            </div>
            <div className="mt-2 mb-8 flex justify-end">
              <button className="h-[66px] rounded-lg bg-[#e1e2e6] px-6 pb-2 text-[24px] font-bold text-[#7a7a7a]">Send Group Message</button>
            </div>
            <OperatorsTable />
          </div>
        </main>
      </div>
      <div className="h-1 border-t-2 border-[#9b9b9b] bg-[#e0e0e0]" />
    </div>
  )
}
